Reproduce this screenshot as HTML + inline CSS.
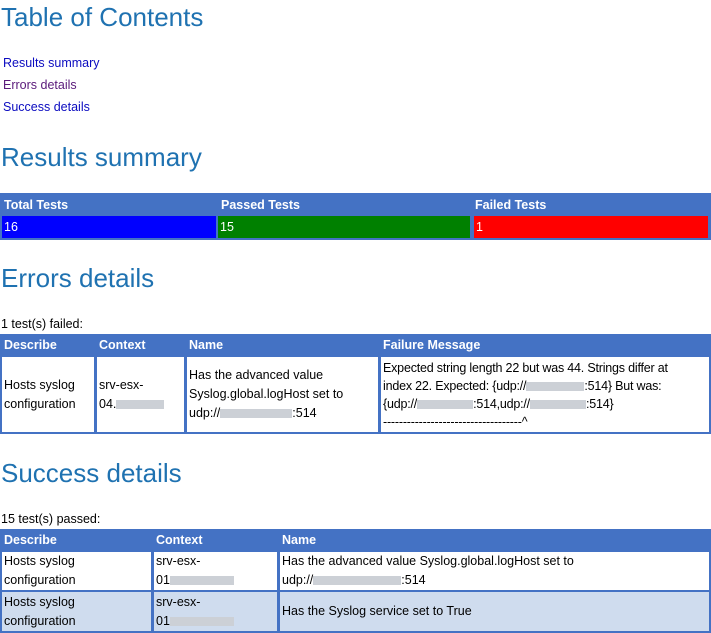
<!DOCTYPE html>
<html><head><meta charset="utf-8"><style>
body{margin:0;width:711px;height:633px;overflow:hidden;background:#fff;font-family:"Liberation Sans",sans-serif;position:relative}
h{position:absolute;left:1px;font-size:26px;color:#1f72b1;white-space:nowrap;line-height:30px}
.l{position:absolute;left:3px;font-size:12.5px;line-height:16px}
.t{position:absolute;background:#4472c4}
.c{position:absolute;font-size:12.5px;line-height:19px;color:#000;padding-left:2px;box-sizing:border-box;display:flex;align-items:center;overflow:hidden;white-space:nowrap}
.c>div{display:block}
.hd{position:absolute;font-size:12.5px;font-weight:bold;color:#fff;padding-left:3px;line-height:19px}
.w{background:#fff}
.b{display:inline-block;width:60px;height:9px;background:#ccd0d6;vertical-align:middle}
.s{position:absolute;left:1px;font-size:12.5px;line-height:14px}
</style></head><body>
<h style="top:2px">Table of Contents</h>
<div class="l" style="top:55px;color:#0b0bc0">Results summary</div>
<div class="l" style="top:77px;color:#5a1a7a">Errors details</div>
<div class="l" style="top:99px;color:#0b0bc0">Success details</div>
<h style="top:142px">Results summary</h>

<div class="t" style="left:0;top:193px;width:711px;height:47px"></div>
<div class="hd" style="left:1px;top:196px">Total Tests</div>
<div class="hd" style="left:218px;top:196px">Passed Tests</div>
<div class="hd" style="left:472px;top:196px">Failed Tests</div>
<div class="c" style="left:2px;top:216px;width:214px;height:22px;background:#0000ff;color:#fff"><div>16</div></div>
<div class="c" style="left:218px;top:216px;width:252px;height:22px;background:#008000;color:#fff"><div>15</div></div>
<div class="c" style="left:474px;top:216px;width:234px;height:22px;background:#ff0000;color:#fff"><div>1</div></div>

<h style="top:263px">Errors details</h>
<div class="s" style="top:317px">1 test(s) failed:</div>
<div class="t" style="left:0;top:334px;width:711px;height:100px"></div>
<div class="hd" style="left:1px;top:336px">Describe</div>
<div class="hd" style="left:96px;top:336px">Context</div>
<div class="hd" style="left:186px;top:336px">Name</div>
<div class="hd" style="left:380px;top:336px">Failure Message</div>
<div class="c w" style="left:2px;top:357px;width:92px;height:75px"><div>Hosts syslog<br>configuration</div></div>
<div class="c w" style="left:97px;top:357px;width:87px;height:75px"><div>srv-esx-<br>04.<span class="b" style="width:48px"></span></div></div>
<div class="c w" style="left:187px;top:357px;width:191px;height:75px"><div>Has the advanced value<br>Syslog.global.logHost set to<br>udp://<span class="b" style="width:72px"></span>:514</div></div>
<div class="c w" style="left:381px;top:357px;width:328px;height:75px;letter-spacing:-0.2px"><div style="line-height:18px">Expected string length 22 but was 44. Strings differ at<br>index 22. Expected: {udp://<span class="b" style="width:58px"></span>:514} But was:<br>{udp://<span class="b" style="width:56px"></span>:514,udp://<span class="b" style="width:56px"></span>:514}<br>-----------------------------------^</div></div>

<h style="top:458px">Success details</h>
<div class="s" style="top:512px">15 test(s) passed:</div>
<div class="t" style="left:0;top:529px;width:711px;height:104px"></div>
<div class="hd" style="left:1px;top:531px">Describe</div>
<div class="hd" style="left:153px;top:531px">Context</div>
<div class="hd" style="left:279px;top:531px">Name</div>
<div class="c w" style="left:2px;top:552px;width:149px;height:38px"><div>Hosts syslog<br>configuration</div></div>
<div class="c w" style="left:154px;top:552px;width:123px;height:38px"><div>srv-esx-<br>01<span class="b" style="width:64px"></span></div></div>
<div class="c w" style="left:280px;top:552px;width:429px;height:38px"><div>Has the advanced value Syslog.global.logHost set to<br>udp://<span class="b" style="width:88px"></span>:514</div></div>
<div class="c" style="left:2px;top:592px;width:149px;height:39px;background:#cfdcee"><div>Hosts syslog<br>configuration</div></div>
<div class="c" style="left:154px;top:592px;width:123px;height:39px;background:#cfdcee"><div>srv-esx-<br>01<span class="b" style="width:64px"></span></div></div>
<div class="c" style="left:280px;top:592px;width:429px;height:39px;background:#cfdcee"><div>Has the Syslog service set to True</div></div>
</body></html>
